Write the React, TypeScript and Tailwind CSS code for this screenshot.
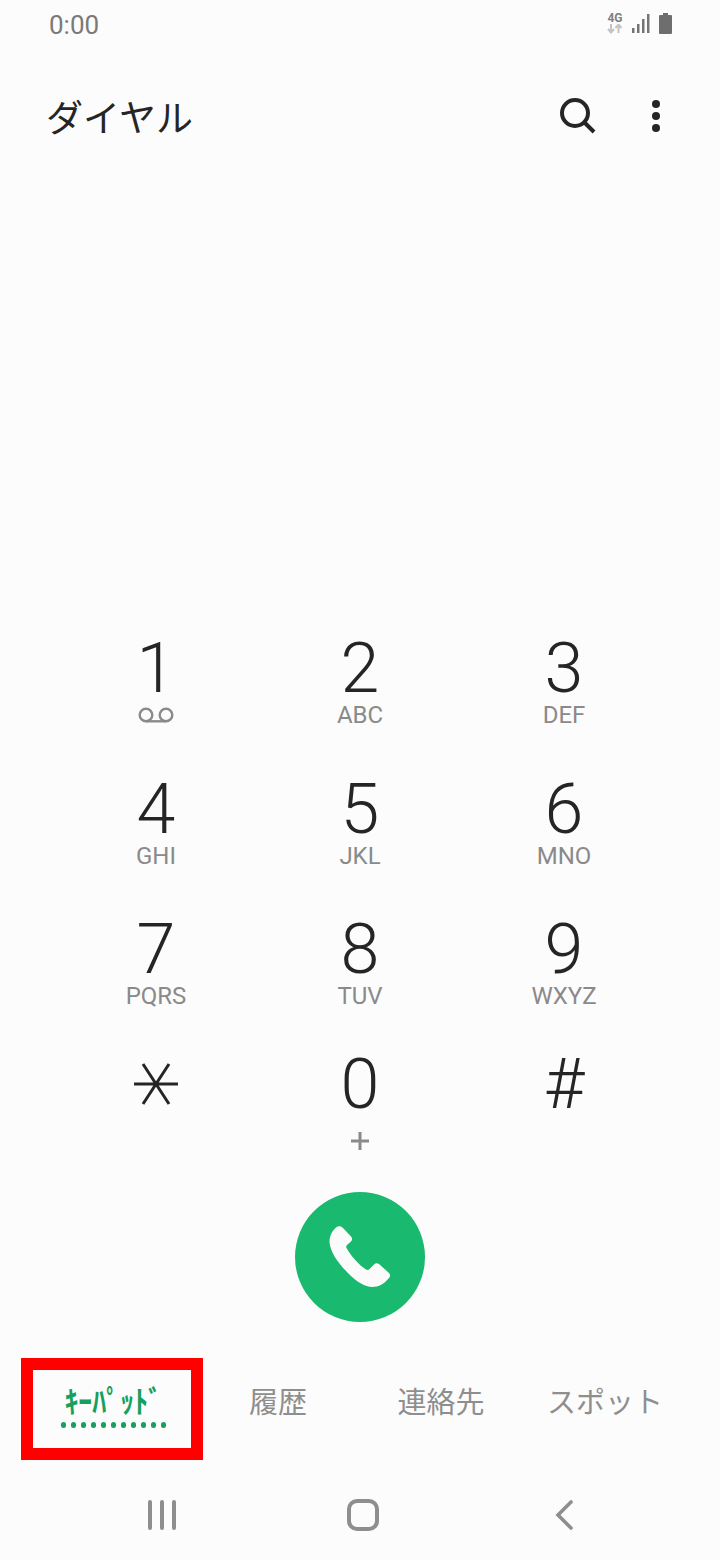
import React from "react";

const keys = [
  { d: "1", s: "vm" }, { d: "2", s: "ABC" }, { d: "3", s: "DEF" },
  { d: "4", s: "GHI" }, { d: "5", s: "JKL" }, { d: "6", s: "MNO" },
  { d: "7", s: "PQRS" }, { d: "8", s: "TUV" }, { d: "9", s: "WXYZ" },
  { d: "star", s: "" }, { d: "0", s: "+" }, { d: "#", s: "" },
];

function Voicemail() {
  return (
    <svg width="36" height="16" viewBox="0 0 36 16" fill="none" stroke="#8a8a8a" strokeWidth="2.4">
      <circle cx="8" cy="8" r="6.300" />
      <circle cx="28" cy="8" r="6.300" />
      <path d="M8 14.300h20" />
    </svg>
  );
}

function Star() {
  return (
    <svg width="44" height="44" viewBox="0 0 44 44" fill="none" stroke="#252525" strokeWidth="3">
      <path d="M0 22h44M9 2l26 40M35 2L9 42" />
    </svg>
  );
}

function Key({ d, s, last }: { d: string; s: string; last: boolean }) {
  return (
    <div className={last ? "h-[140.5px] -mt-[6px] flex flex-col items-center text-center" : "h-[140.5px] flex flex-col items-center text-center"}>
      <div className="h-[73px] pt-[9px]">
        <div className="h-[60px] flex items-center justify-center text-[#252525] text-[70px] font-light leading-[60px] font-['Roboto',sans-serif]">
          {d === "star" ? <Star /> : d}
        </div>
      </div>
      <div className="h-[26px] flex items-center justify-center text-[#8a8a8a] text-[24px] leading-none font-['Roboto',sans-serif]">
        {s === "vm" ? <Voicemail /> : s === "+" ? (
          <svg className="mt-[20px]" width="18" height="20" viewBox="0 0 18 20" fill="none" stroke="#8a8a8a" strokeWidth="3">
            <path d="M0 10h18M9 1v18" />
          </svg>
        ) : s}
      </div>
    </div>
  );
}

export default function App() {
  return (
    <div className="w-[720px] h-[1560px] bg-[#fcfcfc] flex flex-col overflow-hidden font-['Roboto','Noto_Sans_CJK_JP',sans-serif]">
      {/* Status bar */}
      <div className="h-[50px] flex items-center justify-between pl-[49px] pr-[48px]">
        <span className="text-[26px] text-[#7a7a7a] font-['Roboto',sans-serif]">0:00</span>
        <div className="flex items-center gap-[9px] -mt-[3px]">
          <div className="w-[16px] flex flex-col items-center">
            <span className="text-[12px] leading-[11px] font-bold text-[#808080] font-['Roboto',sans-serif]">4G</span>
            <svg width="16" height="10" viewBox="0 0 16 10">
              <path d="M4 0v8M1 5l3 3.500L7 5" stroke="#c4c4c4" strokeWidth="2" fill="none" />
              <path d="M11.500 9V1M8.500 4l3-3.500 3 3.500" stroke="#c4c4c4" strokeWidth="2" fill="none" />
            </svg>
          </div>
          <svg width="18" height="20" viewBox="0 0 18 20" fill="#757575">
            <rect x="0" y="14" width="2.500" height="5" />
            <rect x="5" y="10" width="2.500" height="9" />
            <rect x="10" y="5" width="2.500" height="14" />
            <rect x="15" y="0" width="2.500" height="19" />
          </svg>
          <svg width="13" height="21" viewBox="0 0 13 21" fill="#6e6e6e">
            <path d="M4 0h5v2h3a1 1 0 0 1 1 1v17a1 1 0 0 1-1 1H1a1 1 0 0 1-1-1V3a1 1 0 0 1 1-1h3z" />
          </svg>
        </div>
      </div>

      {/* Header */}
      <div className="h-[136px] flex items-start justify-between pl-[46px] pr-[60px]">
        <h1 className="mt-[38px] text-[37px] leading-[56px] font-normal text-[#252525] font-['Noto_Sans_CJK_JP',sans-serif]">ダイヤル</h1>
        <div className="flex items-center gap-[56px] mt-[48px]">
          <svg width="36" height="36" viewBox="0 0 36 36" fill="none" stroke="#252525" strokeWidth="4">
            <circle cx="15" cy="15" r="13" />
            <path d="M24.500 24.500l9.500 9.500" />
          </svg>
          <div className="flex flex-col gap-[4px]">
            <span className="w-[8px] h-[8px] rounded-full bg-[#252525]" />
            <span className="w-[8px] h-[8px] rounded-full bg-[#252525]" />
            <span className="w-[8px] h-[8px] rounded-full bg-[#252525]" />
          </div>
        </div>
      </div>

      {/* Keypad */}
      <div className="mt-auto px-[54px] grid grid-cols-3">
        {keys.map((k, i) => (
          <Key key={k.d} d={k.d} s={k.s} last={i >= 9} />
        ))}
      </div>

      {/* Call button */}
      <div className="flex justify-center mt-[7px]">
        <div className="w-[130px] h-[130px] rounded-full bg-[#19b96f] flex items-center justify-center">
          <svg width="62" height="62" viewBox="0 0 62 62" fill="#fbfbfb">
            <path d="M7 1.500C9.500-.5 12 0 14 2l8 8.500c1.500 1.500 1.500 3.500 0 5L18 19c-1 1-1 2-.5 3C21 29 31 40 37 43.500c1.500.8 2.500.5 3.500-.5l4.500-4.500c1.500-1.500 3.500-1.500 5-.5l10 9c1.500 1.500 1.500 3.500 0 5-5 6-10 9-17 9-6 0-16-5-25-15C8 36 1 25 .5 16 .5 10 3 5 7 1.500z" />
          </svg>
        </div>
      </div>

      {/* Tabs */}
      <div className="mt-[36px] flex items-center">
        <div className="ml-[21px] w-[182px] h-[102px] border-[12px] border-[#ff0000] flex flex-col items-center justify-center pb-[9px]">
          <span className="text-[#16a05d] text-[31px] leading-[38px] font-bold scale-x-[0.9] ml-[2px] font-['Noto_Sans_CJK_JP',sans-serif] whitespace-nowrap">ｷｰﾊﾟｯﾄﾞ</span>
          <div className="flex gap-[4.500px] mt-[3px] ml-[3px]">
            {Array.from({ length: 11 }).map((_, i) => (
              <span key={i} className="w-[5.500px] h-[5.500px] rounded-full bg-[#16a05d]" />
            ))}
          </div>
        </div>
        <div className="w-[150px] mb-[17px] text-center text-[29px] text-[#8e8e8e] font-['Noto_Sans_CJK_JP',sans-serif]">履歴</div>
        <div className="w-[176px] mb-[17px] text-center text-[29px] text-[#8e8e8e] font-['Noto_Sans_CJK_JP',sans-serif]">連絡先</div>
        <div className="w-[152px] mb-[17px] text-center text-[29px] text-[#8e8e8e] font-['Noto_Sans_CJK_JP',sans-serif] whitespace-nowrap">スポット</div>
      </div>

      {/* Nav bar */}
      <div className="h-[100px] flex items-center pl-[148px]">
        <div className="flex gap-[8px] mt-[10px]">
          <span className="w-[4px] h-[30px] rounded-full bg-[#8e8e8e]" />
          <span className="w-[4px] h-[30px] rounded-full bg-[#8e8e8e]" />
          <span className="w-[4px] h-[30px] rounded-full bg-[#8e8e8e]" />
        </div>
        <div className="w-[32px] h-[32px] mt-[10px] ml-[171px] rounded-[10px] border-[4px] border-[#8e8e8e]" />
        <svg className="mt-[10px] ml-[176px]" width="20" height="30" viewBox="0 0 20 30" fill="none" stroke="#8e8e8e" strokeWidth="3.600" strokeLinecap="round">
          <path d="M16 2L3 15l13 13" />
        </svg>
      </div>
    </div>
  );
}
